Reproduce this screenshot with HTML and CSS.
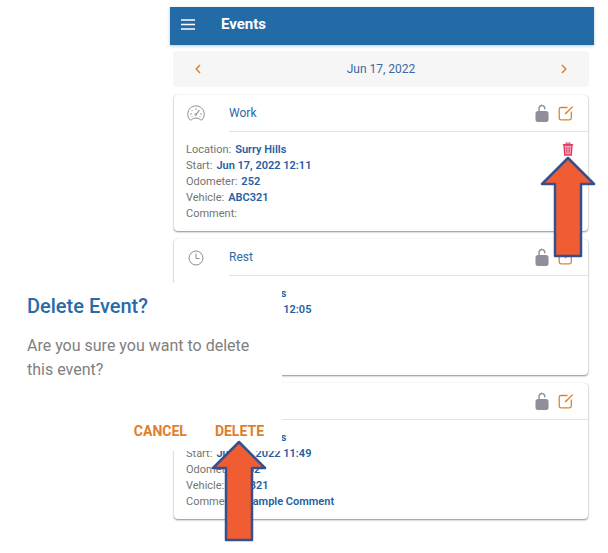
FILE: index.html
```html
<!DOCTYPE html>
<html lang="en">
<head>
<meta charset="utf-8">
<title>Events</title>
<link rel="stylesheet" href="styles.css">
</head>
<body>
<svg class="sprite" aria-hidden="true">
  <symbol id="lock" viewBox="0 0 14 18">
    <path d="M4 8V4.500a3 3.200 0 0 1 5.800-1v1.300" fill="none" stroke="currentColor" stroke-width="1.400" stroke-linecap="round"/>
    <rect x="0.500" y="7" width="13" height="11" rx="2.500" fill="currentColor"/>
  </symbol>
  <symbol id="edit" viewBox="0 0 16 16">
    <path d="M9.500 2.500H3A1.800 1.800 0 0 0 1.200 4.300V13A1.800 1.800 0 0 0 3 14.800H11.500A1.800 1.800 0 0 0 13.300 13V6.500" fill="none" stroke="currentColor" stroke-width="1.300"/>
    <path d="M6.500 9.500L7.200 7.700L14.300 1.200L15.200 2L8.200 8.900Z" fill="currentColor"/>
  </symbol>
  <symbol id="arrow" viewBox="0 0 56 102" preserveAspectRatio="none">
    <path d="M28 2L54 28H41V100H15V28H2Z" fill="#f15d33" stroke="#35508d" stroke-width="2.500" stroke-linejoin="round"/>
  </symbol>
</svg>
<main class="app">
  <header class="topbar">
    <button class="icon-button" type="button" aria-label="Menu">
      <svg width="14" height="11" viewBox="0 0 14 11"><path d="M0 1H14M0 5.500H14M0 10H14" stroke="#fff" stroke-width="1.600"/></svg>
    </button>
    <h1 class="topbar-title">Events</h1>
  </header>
  <nav class="datebar">
    <button class="icon-button orange" type="button" aria-label="Previous day">
      <svg width="6" height="10" viewBox="0 0 6 10"><path d="M5 1L1.200 5L5 9" fill="none" stroke="currentColor" stroke-width="1.500"/></svg>
    </button>
    <span>Jun 17, 2022</span>
    <button class="icon-button orange" type="button" aria-label="Next day">
      <svg width="6" height="10" viewBox="0 0 6 10"><path d="M1 1L4.800 5L1 9" fill="none" stroke="currentColor" stroke-width="1.500"/></svg>
    </button>
  </nav>
  <section class="cards">
    <article class="card">
      <div class="card-icon">
        <svg width="18" height="17" viewBox="0 0 18 17" fill="none" stroke="#8c8c8c">
          <path d="M3.500 15.200C-.5 11.500.2 5.800 3.500 3C6.500.2 11.500.2 14.500 3C17.800 5.800 18.500 11.500 14.500 15.200C13.500 15.200 12.500 13 9 13S4.500 15.200 3.500 15.200Z"/>
          <path d="M9 3V5M4.500 5L5.500 6M3 9H5M13 9H15M4.500 12L5.500 11.500M13.500 12L12.500 11.500" stroke-width=".8"/>
          <path d="M9 9.500L12.500 5" stroke-width="1.200"/><circle cx="8.800" cy="9.600" r=".8"/>
        </svg>
      </div>
      <div class="card-head">
        <h2 class="card-title">Work</h2>
        <button class="icon-button grey" type="button" aria-label="Unlock"><svg width="14" height="18"><use href="#lock"/></svg></button>
        <button class="icon-button orange" type="button" aria-label="Edit"><svg width="16" height="16"><use href="#edit"/></svg></button>
      </div>
      <div class="card-body">
        <dl class="details">
          <div><dt>Location:</dt><dd>Surry Hills</dd></div>
          <div><dt>Start:</dt><dd>Jun 17, 2022 12:11</dd></div>
          <div><dt>Odometer:</dt><dd>252</dd></div>
          <div><dt>Vehicle:</dt><dd>ABC321</dd></div>
          <div><dt>Comment:</dt><dd></dd></div>
        </dl>
        <div class="pointed">
          <button class="icon-button red" type="button" aria-label="Delete">
            <svg width="12" height="14" viewBox="0 0 12 14"><path d="M2 3L2.700 13H9.300L10 3Z" fill="#f6a5b5" stroke="currentColor" stroke-width="1.300"/><path d="M.8 2.700H11.200M4 2.500V1H8V2.500" fill="none" stroke="currentColor"/><path d="M4.500 5V11M6 5V11M7.500 5V11" stroke="currentColor" stroke-width=".6"/></svg>
          </button>
          <svg class="arrow"><use href="#arrow"/></svg>
        </div>
      </div>
    </article>
    <article class="card">
      <div class="card-icon">
        <svg width="16" height="16" viewBox="0 0 16 16" fill="none" stroke="#8c8c8c"><circle cx="8" cy="8" r="7"/><path d="M8 3.500V8.500H11.500"/></svg>
      </div>
      <div class="card-head">
        <h2 class="card-title">Rest</h2>
        <button class="icon-button grey" type="button" aria-label="Unlock"><svg width="14" height="18"><use href="#lock"/></svg></button>
        <button class="icon-button orange" type="button" aria-label="Edit"><svg width="16" height="16"><use href="#edit"/></svg></button>
      </div>
      <div class="card-body">
        <dl class="details">
          <div><dt>Location:</dt><dd>Surry Hills</dd></div>
          <div><dt>Start:</dt><dd>Jun 17, 2022 12:05</dd></div>
        </dl>
      </div>
    </article>
    <article class="card">
      <div class="card-icon"></div>
      <div class="card-head">
        <h2 class="card-title"></h2>
        <button class="icon-button grey" type="button" aria-label="Unlock"><svg width="14" height="18"><use href="#lock"/></svg></button>
        <button class="icon-button orange" type="button" aria-label="Edit"><svg width="16" height="16"><use href="#edit"/></svg></button>
      </div>
      <div class="card-body">
        <dl class="details">
          <div><dt>Location:</dt><dd>Surry Hills</dd></div>
          <div><dt>Start:</dt><dd>Jun 17, 2022 11:49</dd></div>
          <div><dt>Odometer:</dt><dd>252</dd></div>
          <div><dt>Vehicle:</dt><dd>ABC321</dd></div>
          <div><dt>Comment:</dt><dd>Example Comment</dd></div>
        </dl>
      </div>
    </article>
  </section>
</main>
<div class="dialog" role="dialog" aria-labelledby="dialog-title">
  <h2 class="dialog-title" id="dialog-title">Delete Event?</h2>
  <p class="dialog-text">Are you sure you want to delete this event?</p>
  <div class="dialog-actions">
    <button class="text-button" type="button">CANCEL</button>
    <div class="pointed">
      <button class="text-button" type="button">DELETE</button>
      <svg class="arrow"><use href="#arrow"/></svg>
    </div>
  </div>
</div>
</body>
</html>
```

FILE: styles.css
```css
* {
  box-sizing: border-box;
}

body {
  position: relative;
  min-height: 100vh;
  margin: 0;
  background: #fff;
  color: #737373;
  font-family: Roboto, "Liberation Sans", sans-serif;
}

h1, h2, p, dl, dd {
  margin: 0;
}

button {
  padding: 0;
  border: 0;
  background: none;
  font: inherit;
  cursor: pointer;
}

svg {
  display: block;
}

.sprite {
  position: absolute;
  width: 0;
  height: 0;
}

.orange { color: #e0822f; }
.grey { color: #8e8f98; }
.red { color: #e2345c; }

.app {
  padding: 7px 14px 0 170px;
}

.topbar {
  display: flex;
  align-items: center;
  gap: 26px;
  height: 38px;
  padding: 0 11px;
  background: #236ba7;
  box-shadow: 0 1px 3px rgba(35, 107, 167, 0.35);
}

.topbar-title {
  padding-bottom: 4px;
  color: #fff;
  font-size: 15px;
  font-weight: 700;
  line-height: 20px;
}

.topbar .icon-button {
  padding-bottom: 4px;
}

.datebar {
  display: flex;
  align-items: center;
  justify-content: space-between;
  height: 36px;
  margin: 6px 5px 8px 3px;
  padding: 0 22px;
  border-radius: 3px;
  background: #f6f6f6;
  color: #3a69a3;
  font-size: 12px;
}

.cards {
  display: grid;
  gap: 8px;
  margin: 0 6px 0 4px;
}

.card {
  display: grid;
  grid-template-columns: 55px 1fr;
  border-radius: 4px;
  box-shadow: 0 1px 2px rgba(0, 0, 0, 0.45), 0 0 1px rgba(0, 0, 0, 0.15);
}

.card-icon {
  display: flex;
  align-items: center;
  justify-content: center;
  width: 43px;
}

.card-head {
  display: flex;
  align-items: center;
  gap: 9px;
  height: 37px;
  padding-right: 14px;
  border-bottom: 1px solid #e2e2e2;
}

.card-title {
  flex: 1;
  color: #2c6aa8;
  font-size: 12px;
  font-weight: 400;
}

.card-body {
  display: flex;
  grid-column: 1 / -1;
  align-items: flex-start;
  justify-content: space-between;
  min-height: 99px;
  padding: 10px 14px 9px 12px;
}

.details {
  font-size: 11px;
  line-height: 16px;
}

.details div {
  display: flex;
  gap: 4px;
}

.details dd {
  color: #2460a2;
  font-weight: 600;
}

.pointed {
  position: relative;
}

.arrow {
  position: absolute;
  z-index: 3;
  top: 100%;
  left: 50%;
  width: 56px;
  height: 102px;
  transform: translateX(-50%);
}

.card .icon-button {
  display: block;
}

.dialog {
  position: absolute;
  z-index: 2;
  top: 283px;
  left: 0;
  width: 282px;
  padding: 10px 18px 11px 27px;
  background: #fff;
}

.dialog-title {
  color: #286ba8;
  font-size: 20px;
  font-weight: 500;
  line-height: 26px;
}

.dialog-text {
  margin: 15px 0 40px;
  color: #808080;
  font-size: 16px;
  line-height: 24px;
}

.dialog-actions {
  display: flex;
  justify-content: flex-end;
  gap: 28px;
}

.text-button {
  display: block;
  color: #df7e2c;
  font-size: 14px;
  font-weight: 700;
  line-height: 18px;
}
```
